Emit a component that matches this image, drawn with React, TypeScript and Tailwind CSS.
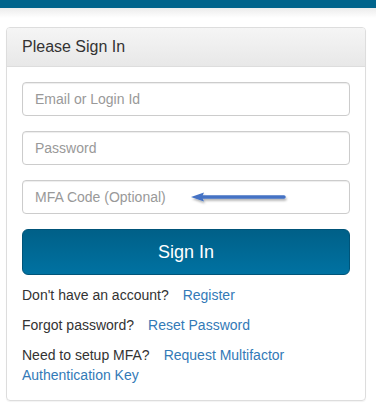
import React from "react";

export default function App() {
  return (
    <div className="w-[376px] h-[413px] bg-white relative overflow-hidden" style={{ fontFamily: '"Liberation Sans", Arial, sans-serif' }}>
      <div className="h-[8px] bg-[#00648c]" />
      <div className="h-[10px] bg-gradient-to-b from-[#ececec] to-white" />
      <div className="mx-[6px] mt-[9px] w-[360px] border border-[#dddddd] rounded-[4px] shadow-[0_1px_1px_rgba(0,0,0,0.05)]">
        <div className="h-[39px] px-[15px] flex items-center border-b border-[#dddddd] rounded-t-[3px] bg-gradient-to-b from-[#f5f5f5] to-[#e8e8e8]">
          <span className="text-[16px] text-[#333333]">Please Sign In</span>
        </div>
        <div className="px-[15px] pt-[15px] pb-[15px] flex flex-col">
          <input className="h-[34px] w-full border border-[#cccccc] rounded-[4px] px-[12px] text-[14px] text-[#555] placeholder:text-[#999999] shadow-[inset_0_1px_1px_rgba(0,0,0,0.075)] outline-none" placeholder="Email or Login Id" />
          <input className="mt-[15px] h-[34px] w-full border border-[#cccccc] rounded-[4px] px-[12px] text-[14px] text-[#555] placeholder:text-[#999999] shadow-[inset_0_1px_1px_rgba(0,0,0,0.075)] outline-none" placeholder="Password" />
          <div className="mt-[15px] relative">
            <input className="h-[34px] w-full border border-[#cccccc] rounded-[4px] px-[12px] text-[14px] text-[#555] placeholder:text-[#999999] shadow-[inset_0_1px_1px_rgba(0,0,0,0.075)] outline-none" placeholder="MFA Code (Optional)" />
            <svg className="absolute left-[168px] top-[10px]" width="100" height="16" viewBox="0 0 100 16">
              <defs>
                <filter id="sh" x="-10%" y="-50%" width="120%" height="200%">
                  <feDropShadow dx="1" dy="2" stdDeviation="1" floodColor="#000" floodOpacity="0.3" />
                </filter>
              </defs>
              <g filter="url(#sh)">
                <line x1="12" y1="7" x2="94" y2="7" stroke="#4472c4" strokeWidth="3.5" strokeLinecap="round" />
                <path d="M1 7 L14 2.5 L12 7 L14 11.5 Z" fill="#4472c4" />
              </g>
            </svg>
          </div>
          <button className="mt-[15px] h-[46px] w-full rounded-[6px] border border-[#005479] bg-gradient-to-b from-[#006088] to-[#0072a2] text-white text-[18px]">
            Sign In
          </button>
          <div className="mt-[10px] text-[14px] leading-[20px] text-[#333333]">
            <p>Don't have an account?<a className="ml-[14px] text-[#337ab7]">Register</a></p>
            <p className="mt-[10px]">Forgot password?<a className="ml-[14px] text-[#337ab7]">Reset Password</a></p>
            <p className="mt-[10px]">Need to setup MFA?<a className="ml-[14px] text-[#337ab7]">Request Multifactor</a><br /><a className="text-[#337ab7]">Authentication Key</a></p>
          </div>
        </div>
      </div>
    </div>
  );
}
